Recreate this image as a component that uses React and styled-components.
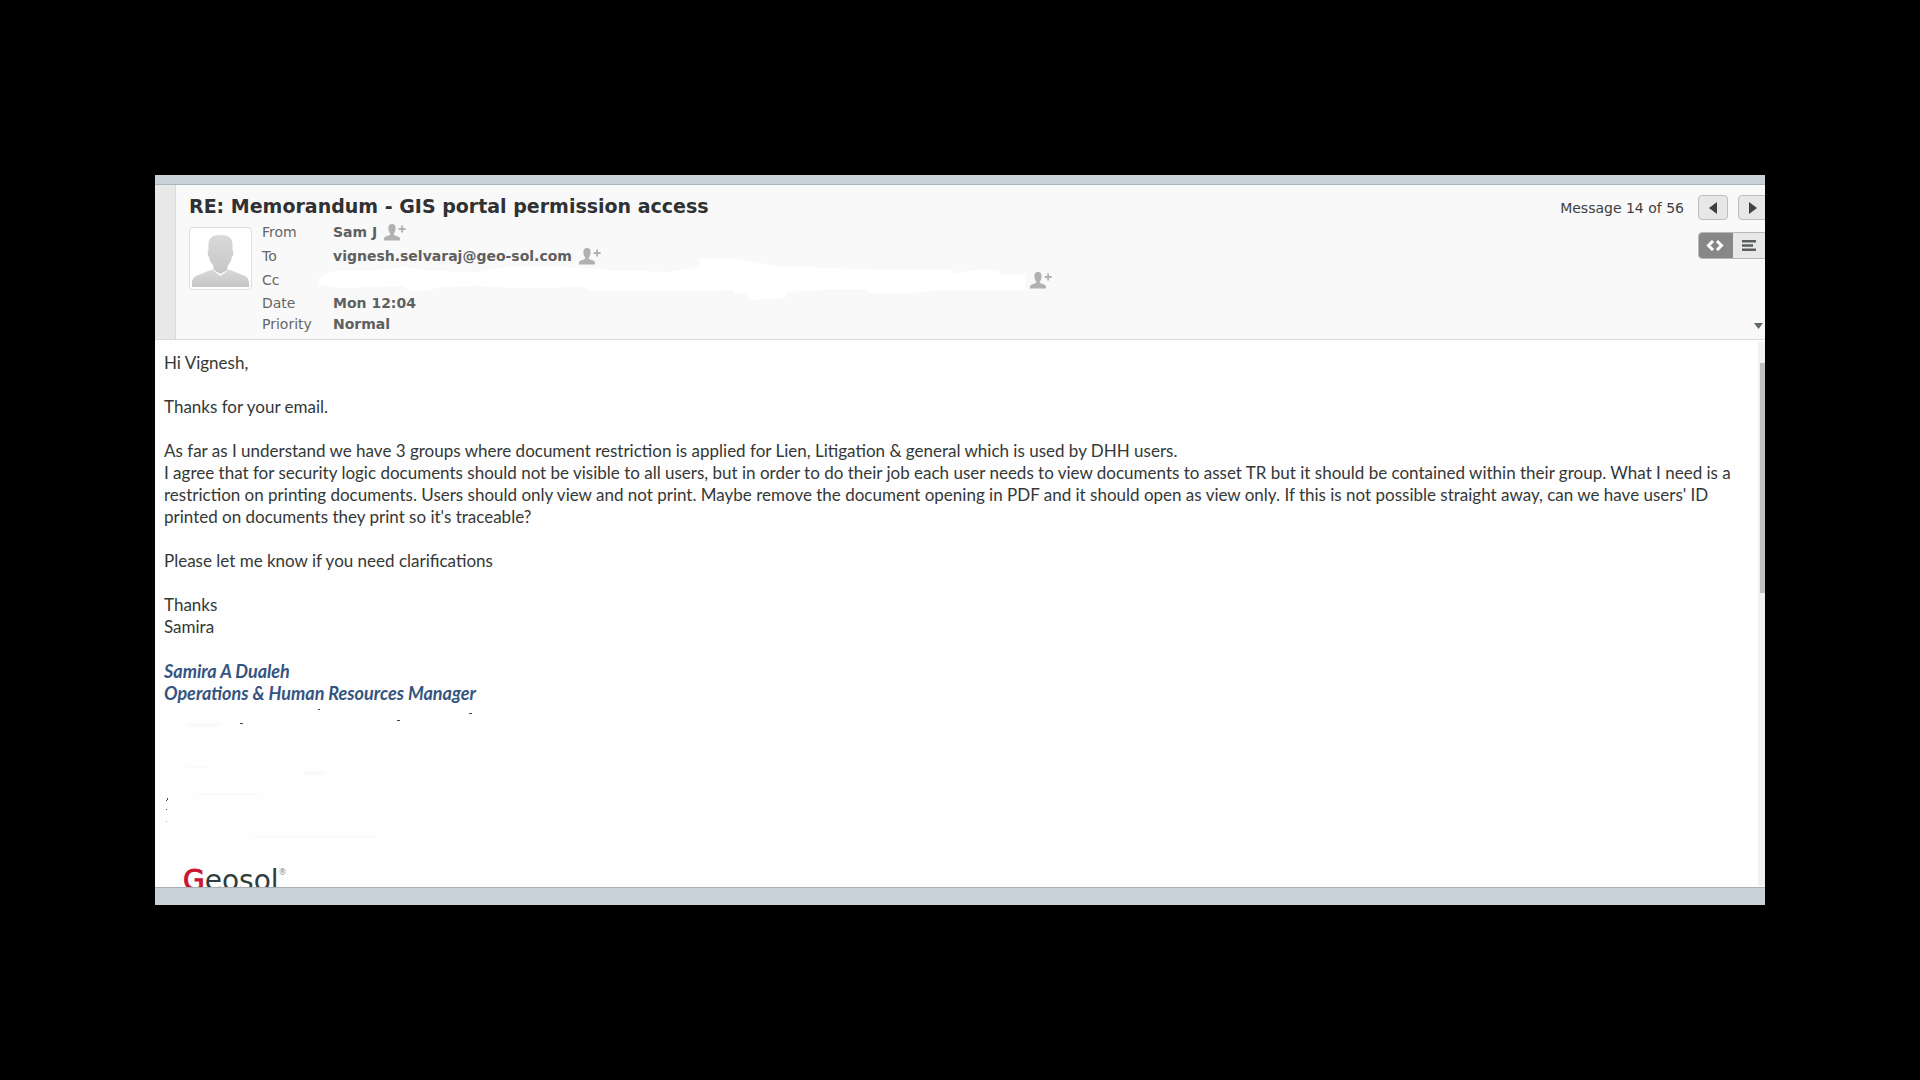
import React from 'react'
import styled, { createGlobalStyle } from 'styled-components'

const GlobalStyle = createGlobalStyle`
  * {
    box-sizing: border-box;
  }
  body {
    margin: 0;
    background: #000;
  }
`

const Stage = styled.div`
  display: flex;
  height: 100vh;
  padding: 175px 155px;
  background: #000;
  font-family: 'DejaVu Sans', Verdana, sans-serif;
  font-size: 14px;
  color: #333;
`

const Window = styled.main`
  flex: 1;
  min-width: 0;
  display: flex;
  flex-direction: column;
  overflow: hidden;
  background: #fefefe;
`

const TopStrip = styled.div`
  flex: none;
  height: 10px;
  background: #c9d1d8;
  border-bottom: 1px solid #a9b5bc;
`

const BottomStrip = styled.div`
  flex: none;
  height: 18px;
  background: #c9d1d8;
  border-top: 1px solid #a9b1b6;
`

const Header = styled.header`
  flex: none;
  display: flex;
  background: #f9f9f9;
  border-bottom: 1px solid #dadada;
`

const Gutter = styled.div`
  width: 21px;
  background: #e8e8e8;
  border-right: 1px solid #d9d9d9;
`

const Summary = styled.div`
  flex: 1;
  min-width: 0;
  padding: 8px 0 5px 13px;
`

const Subject = styled.h1`
  margin: 0;
  font-size: 19px;
  line-height: 27px;
  font-weight: bold;
  color: #2f3132;
`

const Sender = styled.div`
  display: flex;
  gap: 10px;
`

const Avatar = styled.div`
  flex: none;
  width: 63px;
  height: 63px;
  margin-top: 7px;
  padding: 2px;
  background: #fff;
  border: 1px solid #dedede;
  border-radius: 4px;
`

const Fields = styled.dl`
  flex: 1;
  margin: 0;
`

const Field = styled.div`
  display: flex;
  align-items: center;
  height: ${({ $tall }) => ($tall ? '24px' : '21px')};
`

const FieldName = styled.dt`
  width: 71px;
  color: #666;
`

const FieldValue = styled.dd`
  position: relative;
  display: flex;
  align-items: center;
  gap: 7px;
  margin: 0;
  font-weight: bold;
  color: #5f5f5f;
`

const HiddenNames = styled.span`
  width: 690px;
  height: 24px;
`

const Smear = styled.svg`
  position: absolute;
  left: -14px;
  top: -10px;
`

const IconButton = styled.button`
  display: flex;
  padding: 0;
  background: none;
  border: 0;
`

const Tools = styled.div`
  display: flex;
  flex-direction: column;
  align-items: flex-end;
  margin-right: -3px;
  padding: 10px 0;
`

const Pager = styled.div`
  display: flex;
  align-items: center;
  gap: 10px;
  margin-bottom: 12px;
`

const PagerText = styled.span`
  margin-right: 4px;
  color: #404040;
`

const PagerButton = styled.button`
  display: flex;
  align-items: center;
  justify-content: center;
  width: 30px;
  height: 25px;
  padding: 0;
  background: #e7e7e7;
  border: 1px solid #bdbdbd;
  border-radius: 4px;
`

const Toggle = styled.div`
  display: flex;
  width: 70px;
  height: 27px;
  border: 1px solid #b9b9b9;
  border-radius: 4px;
  overflow: hidden;
`

const ToggleButton = styled.button`
  flex: 1;
  display: flex;
  align-items: center;
  justify-content: center;
  padding: 0 2px 0 0;
  border: 0;
  background: ${({ $active }) => ($active ? '#878787' : '#e8e8e8')};
`

const Expand = styled(IconButton)`
  margin: auto 5px 0 0;
`

const Body = styled.div`
  flex: 1;
  min-height: 0;
  display: flex;
`

const Letter = styled.article`
  flex: 1;
  min-width: 0;
  padding: 12px 22px 0 9px;
  overflow: hidden;
  font-family: Lato, Carlito, sans-serif;
  font-size: 17px;
  line-height: 22px;
  color: #343837;
`

const Paragraph = styled.p`
  margin: 0 0 22px;
`

const Signature = styled.p`
  margin: 0;
  font-size: 18px;
  font-weight: bold;
  font-style: italic;
  color: #35547f;
`

const Contact = styled.div`
  height: 163px;
`

const Logo = styled.div`
  display: flex;
  margin-left: 19px;
  font-family: 'DejaVu Sans', sans-serif;
  font-size: 28px;
  line-height: 28px;
  color: #2e3c3b;
`

const LogoInitial = styled.span`
  color: #cb1632;
  -webkit-text-stroke: 1px #cb1632;
`

const Registered = styled.span`
  font-size: 8px;
  line-height: 12px;
  color: #888;
`

const ScrollTrack = styled.div`
  width: 7px;
  margin: 2px 0 1px;
  padding: 21px 0 0 2px;
  background: #f1f1f1;
`

const ScrollThumb = styled.div`
  height: 44%;
  background: #c1c1c1;
`

const AddContact = ({ name }) => (
  <IconButton aria-label={`Add ${name} to address book`}>
    <svg width="22" height="17" viewBox="0 0 22 17" fill="#b1b1b1">
      <path d="M8 0c2.500 0 3.700 1.500 3.600 4.200C11.500 7 10.700 8.500 9.800 9.500v1.300c.8 1 5.600 1.100 6.200 3.700V16.500H0v-2c.6-2.600 5.400-2.700 6.200-3.700V9.500C5.300 8.500 4.500 7 4.400 4.200 4.300 1.500 5.500 0 8 0z" />
      <path d="M17.200 1.500h1.800v2.600h2.600v1.900H19v2.600h-1.800V6h-2.600V4.100h2.600z" />
    </svg>
  </IconButton>
)

const Portrait = () => (
  <svg width="57" height="57" viewBox="0 0 57 57">
    <defs>
      <linearGradient id="portrait" x1="0" y1="0" x2="0" y2="1">
        <stop offset="0" stopColor="#d9d9d9" />
        <stop offset="1" stopColor="#c6c6c6" />
      </linearGradient>
    </defs>
    <g fill="url(#portrait)">
      <path d="M28.500 5C37 5 41 8 40.500 16v4.500c1.300.2 1.200 5.500-.7 6.500C39.500 31 37.500 33.500 35.500 36v4l-7 4-7-4v-4c-2-2.500-4-5-4.300-9-1.900-1-2-6.300-.7-6.500V16C16 8 20 5 28.500 5z" />
      <path d="M20 39.500 28.500 46 37 39.500 53 46c2.500 1.200 4 3.500 4 6.500V57H0v-4.500C0 49.500 1.500 47.200 4 46z" />
    </g>
  </svg>
)

const App = () => (
  <Stage>
    <GlobalStyle />
    <Window>
      <TopStrip />
      <Header>
        <Gutter />
        <Summary>
          <Subject>RE: Memorandum - GIS portal permission access</Subject>
          <Sender>
            <Avatar>
              <Portrait />
            </Avatar>
            <Fields>
              <Field $tall>
                <FieldName>From</FieldName>
                <FieldValue>
                  Sam J <AddContact name="Sam J" />
                </FieldValue>
              </Field>
              <Field $tall>
                <FieldName>To</FieldName>
                <FieldValue>
                  vignesh.selvaraj@geo-sol.com <AddContact name="vignesh.selvaraj" />
                </FieldValue>
              </Field>
              <Field $tall>
                <FieldName>Cc</FieldName>
                <FieldValue>
                  <HiddenNames />
                  <Smear width="710" height="44" viewBox="0 0 710 44" fill="#fff" aria-hidden="true">
                    <path d="M0 20 14 13 60 12 84 9 112 13 160 14 190 8 230 8 290 12 350 14 376 10 382 6 378 0 412 0 460 8 512 10 560 12 634 12 636 16 652 12 678 12 684 17 706 17 707 32 620 32 594 35 550 35 548 31 500 32 468 34 466 40 430 42 428 36 416 36 414 32 362 33 270 33 266 29 200 30 160 28 118 29 112 32 92 33 84 28 20 30 0 27z" />
                  </Smear>
                  <AddContact name="Cc" />
                </FieldValue>
              </Field>
              <Field>
                <FieldName>Date</FieldName>
                <FieldValue>Mon 12:04</FieldValue>
              </Field>
              <Field>
                <FieldName>Priority</FieldName>
                <FieldValue>Normal</FieldValue>
              </Field>
            </Fields>
          </Sender>
        </Summary>
        <Tools>
          <Pager>
            <PagerText>Message 14 of 56</PagerText>
            <PagerButton aria-label="Previous message">
              <svg width="8" height="12" viewBox="0 0 8 12" fill="#404040">
                <path d="M8 0v12L0 6z" />
              </svg>
            </PagerButton>
            <PagerButton aria-label="Next message">
              <svg width="8" height="12" viewBox="0 0 8 12" fill="#404040">
                <path d="M0 0v12l8-6z" />
              </svg>
            </PagerButton>
          </Pager>
          <Toggle>
            <ToggleButton $active aria-label="HTML view">
              <svg width="18" height="11" viewBox="0 0 18 11" fill="none" stroke="#fff" strokeWidth="3">
                <path d="M7 1 2.500 5.500 7 10M11 1l4.500 4.500L11 10" />
              </svg>
            </ToggleButton>
            <ToggleButton aria-label="Plain text view">
              <svg width="14" height="11" viewBox="0 0 14 11" fill="#59605f">
                <path d="M0 0h14v2.400H0zM0 4.300h11v2.400H0zM0 8.600h14V11H0z" />
              </svg>
            </ToggleButton>
          </Toggle>
          <Expand aria-label="Show more headers">
            <svg width="9" height="6" viewBox="0 0 9 6" fill="#5e6a6d">
              <path d="M0 0h9L4.500 6z" />
            </svg>
          </Expand>
        </Tools>
      </Header>
      <Body>
        <Letter>
          <Paragraph>Hi Vignesh,</Paragraph>
          <Paragraph>Thanks for your email.</Paragraph>
          <Paragraph>
            As far as I understand we have 3 groups where document restriction is applied for Lien, Litigation &amp;
            general which is used by DHH users.
            <br />
            I agree that for security logic documents should not be visible to all users, but in order to do their job
            each user needs to view documents to asset TR but it should be contained within their group. What I need is a
            restriction on printing documents. Users should only view and not print. Maybe remove the document opening in
            PDF and it should open as view only. If this is not possible straight away, can we have users' ID printed on
            documents they print so it's traceable?
          </Paragraph>
          <Paragraph>Please let me know if you need clarifications</Paragraph>
          <Paragraph>
            Thanks
            <br />
            Samira
          </Paragraph>
          <Signature>
            Samira A Dualeh
            <br />
            Operations &amp; Human Resources Manager
          </Signature>
          <Contact>
            <svg width="320" height="150" viewBox="0 0 320 150" fill="#444" aria-hidden="true">
              <path d="M154 5h2v1h-2zM76 19h3v1h-3zM233 16h3v1h-3zM305 9h3v1h-3zM3 94h1v2H3zM2 96h1v1H2zM2 105h1v1H2z" />
              <path fill="#aaa" d="M2 117h1v1H2z" />
              <path fill="#fafafa" d="M22 19h35v4H22zM24 62h18v2H24zM140 67h22v4h-22zM34 89h60v2H34zM90 132h120v2H90z" />
            </svg>
          </Contact>
          <Logo>
            <LogoInitial>G</LogoInitial>eosol<Registered>®</Registered>
          </Logo>
        </Letter>
        <ScrollTrack>
          <ScrollThumb />
        </ScrollTrack>
      </Body>
      <BottomStrip />
    </Window>
  </Stage>
)

export default App
